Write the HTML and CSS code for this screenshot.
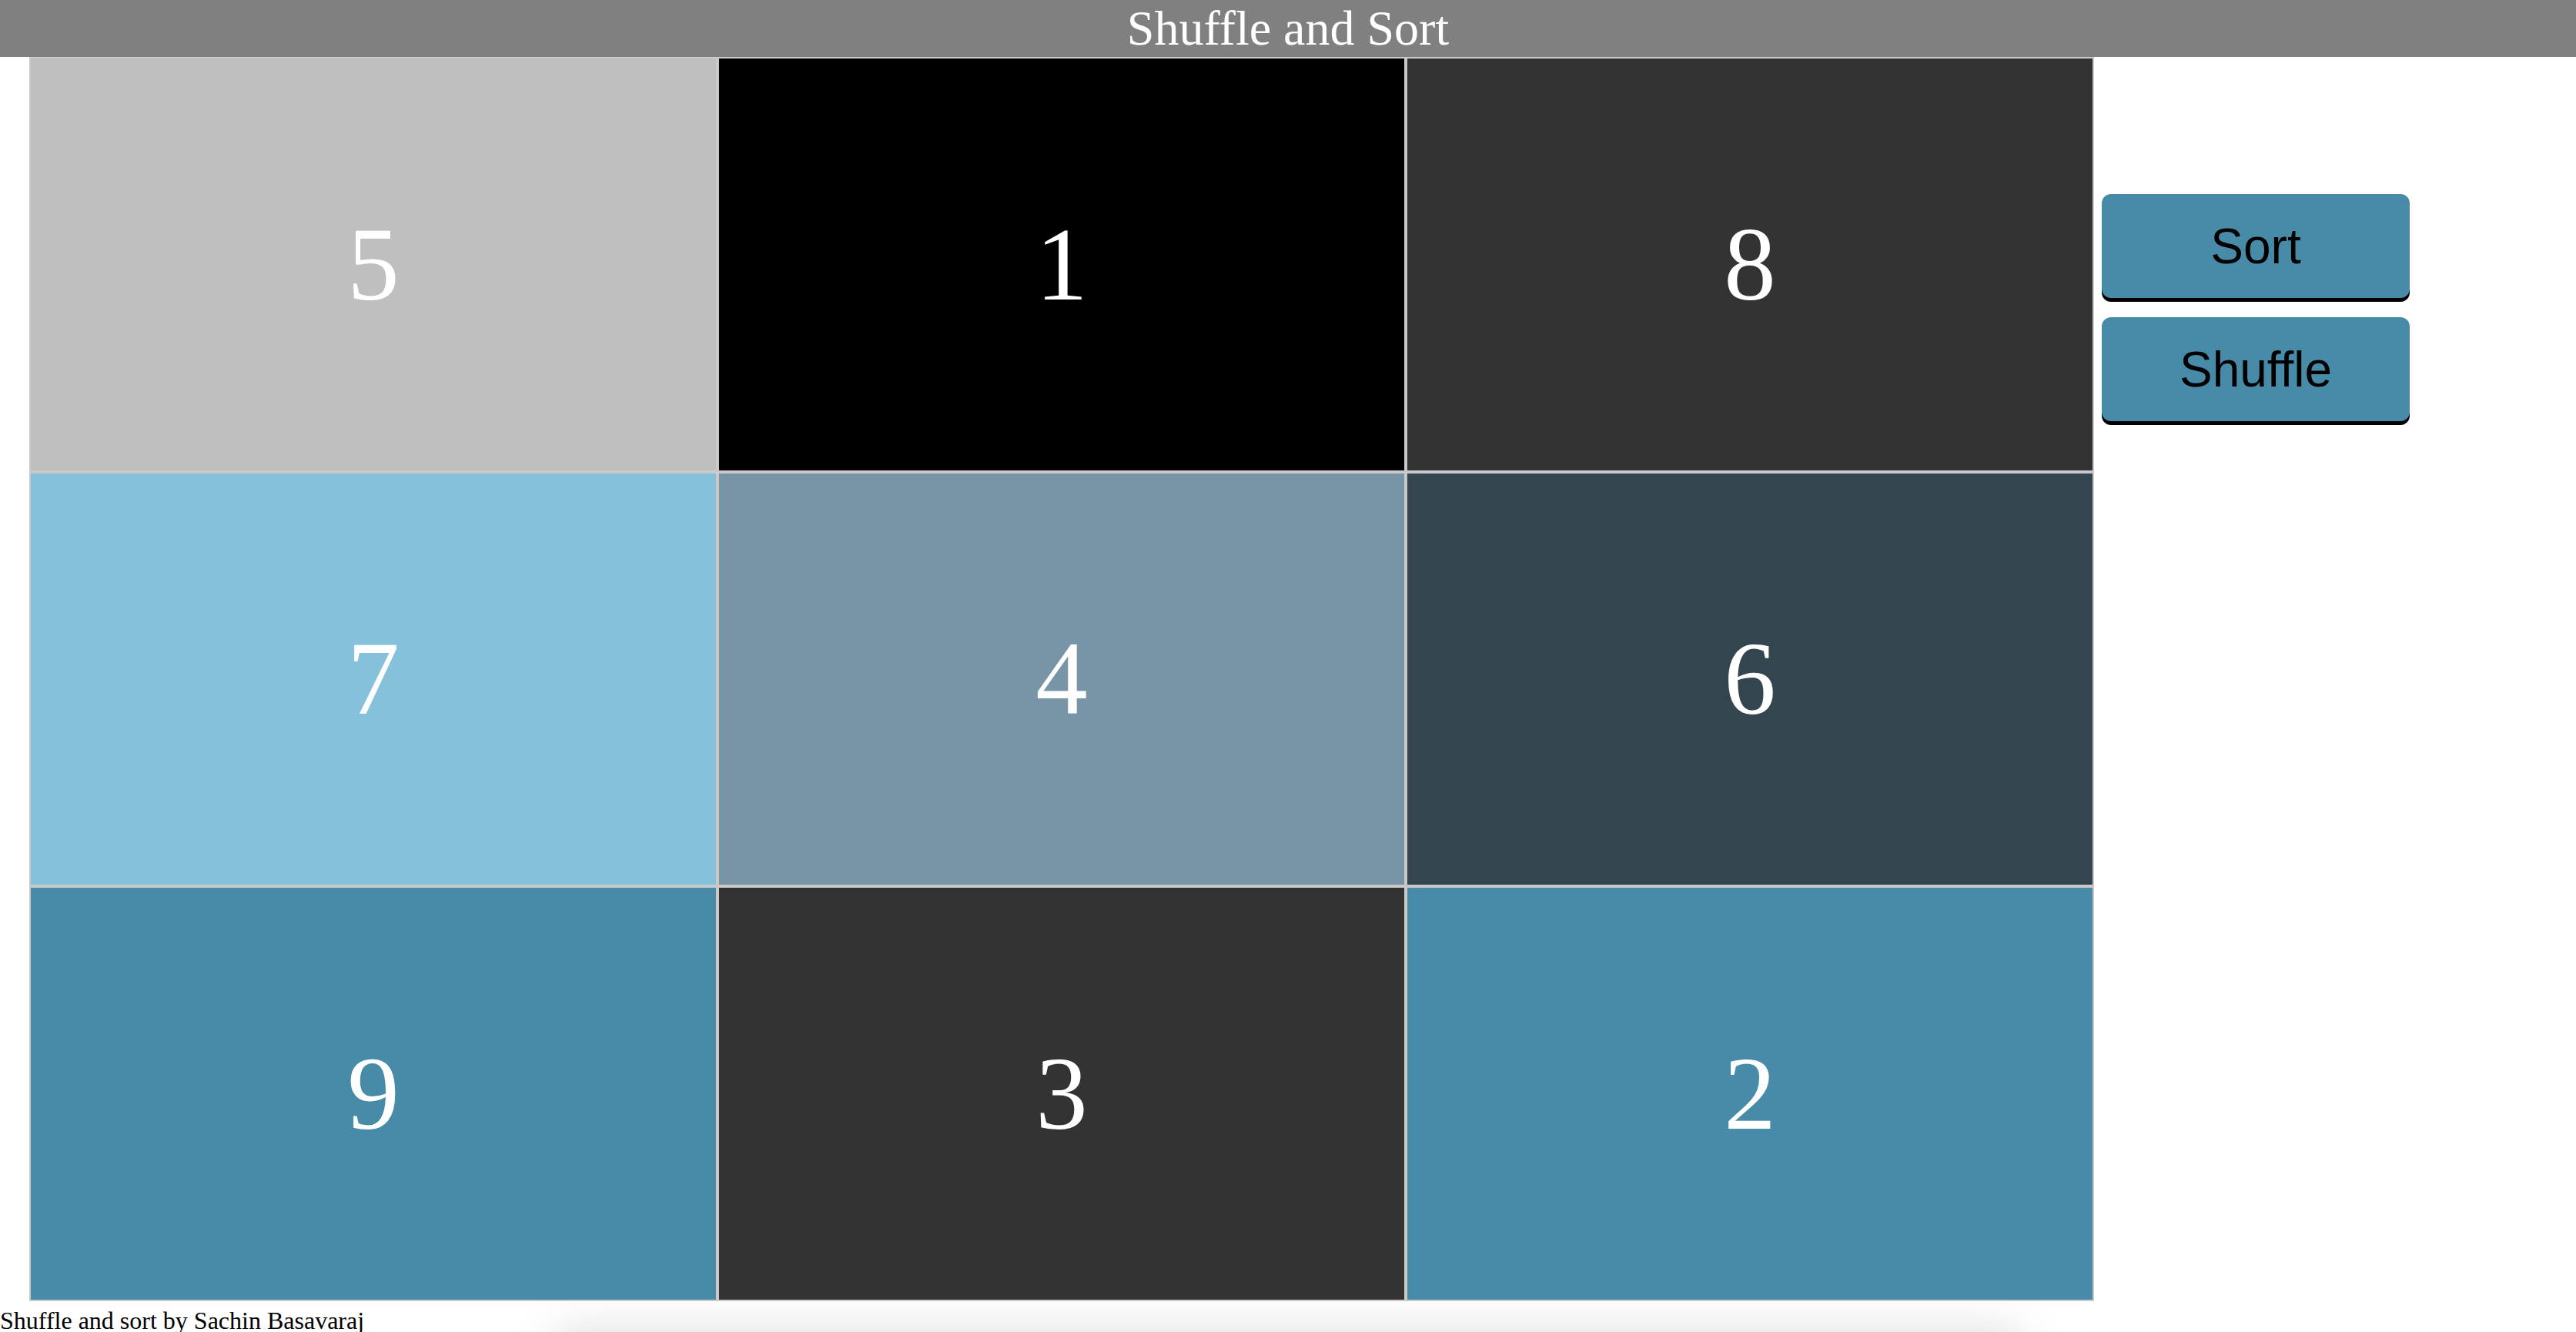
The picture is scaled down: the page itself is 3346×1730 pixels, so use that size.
FILE: index.html
```html
<!DOCTYPE html>
<html>
<head>
<meta charset="utf-8">
<title>Shuffle and Sort</title>
<link rel="stylesheet" href="styles.css">
</head>
<body>
<h1 class="title">Shuffle and Sort</h1>
<div class="main">
  <div class="grid">
    <div class="cell c-silver">5</div>
    <div class="cell c-black">1</div>
    <div class="cell c-dark">8</div>
    <div class="cell c-sky">7</div>
    <div class="cell c-slate">4</div>
    <div class="cell c-deep">6</div>
    <div class="cell c-teal">9</div>
    <div class="cell c-dark">3</div>
    <div class="cell c-teal">2</div>
  </div>
  <div class="actions">
    <button class="btn">Sort</button>
    <button class="btn">Shuffle</button>
  </div>
</div>
<p class="footer">Shuffle and sort by Sachin Basavaraj</p>
<div class="panel"></div>
</body>
</html>
```
FILE: styles.css
```css
html, body {
  margin: 0;
  padding: 0;
  background: #ffffff;
}
body {
  font-family: "Liberation Serif", "Times New Roman", serif;
}
.title {
  margin: 0;
  background: #808080;
  color: #ffffff;
  font-weight: normal;
  font-size: 64px;
  line-height: normal;
  text-align: center;
  font-family: "Liberation Serif", "Times New Roman", serif;
}
.main {
  display: flex;
  align-items: flex-start;
  padding-left: 38px;
}
.grid {
  display: grid;
  grid-template-columns: repeat(3, 894px);
  grid-template-rows: repeat(3, 538.5px);
}
.cell {
  box-sizing: border-box;
  border: 2px solid #c9c9c9;
  display: flex;
  align-items: center;
  justify-content: center;
  color: #ffffff;
  font-size: 135px;
  font-family: "Liberation Serif", "Times New Roman", serif;
}
.c-silver { background: #bfbfbf; }
.c-black { background: #000000; }
.c-dark { background: #333333; }
.c-sky { background: #85c1da; }
.c-slate { background: #7795a6; }
.c-deep { background: #33454e; }
.c-teal { background: #488ba9; }
.actions {
  display: flex;
  flex-direction: column;
  gap: 25px;
  margin-left: 10px;
  padding-top: 178px;
}
.btn {
  width: 400px;
  height: 135px;
  border: none;
  border-radius: 12px;
  background: #488ba9;
  color: #000000;
  font-family: "Liberation Sans", Arial, sans-serif;
  font-size: 64px;
  line-height: normal;
  padding: 0;
  box-shadow: 0 5px 0 #000000;
}
.footer {
  margin: 7px 0 0 0;
  font-size: 32px;
  line-height: normal;
  color: #000000;
}
.panel {
  width: 1900px;
  height: 200px;
  margin: 0 auto;
  background: #ffffff;
  box-shadow: 0 0 60px rgba(0, 0, 0, 0.16);
}
```
